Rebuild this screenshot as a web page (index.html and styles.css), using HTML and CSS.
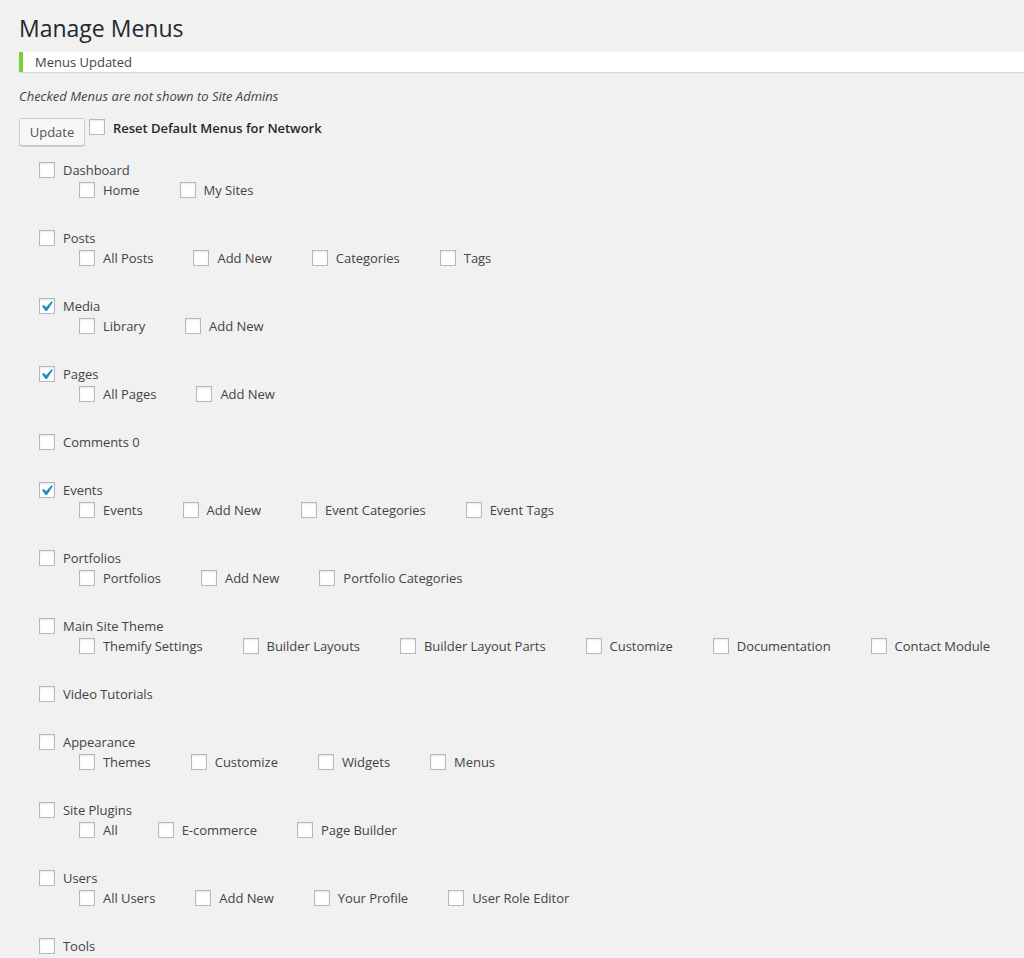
FILE: index.html
```html
<!DOCTYPE html>
<html>
<head>
<meta charset="utf-8">
<link rel="stylesheet" href="styles.css">
</head>
<body>
<div class="wrap">
  <h1 class="title">Manage Menus</h1>
  <div class="notice">Menus Updated</div>
  <p class="desc">Checked Menus are not shown to Site Admins</p>
  <div class="actions">
    <button class="btn">Update</button>
    <span class="cb reset-cb"></span>
    <span class="reset-label">Reset Default Menus for Network</span>
  </div>
  <div class="menus">
    <div class="group">
      <div class="row top"><span class="cb"></span><span class="lbl">Dashboard</span></div>
      <div class="row sub">
        <div class="item"><span class="cb"></span><span class="lbl">Home</span></div>
        <div class="item"><span class="cb"></span><span class="lbl">My Sites</span></div>
      </div>
    </div>
    <div class="group">
      <div class="row top"><span class="cb"></span><span class="lbl">Posts</span></div>
      <div class="row sub">
        <div class="item"><span class="cb"></span><span class="lbl">All Posts</span></div>
        <div class="item"><span class="cb"></span><span class="lbl">Add New</span></div>
        <div class="item"><span class="cb"></span><span class="lbl">Categories</span></div>
        <div class="item"><span class="cb"></span><span class="lbl">Tags</span></div>
      </div>
    </div>
    <div class="group">
      <div class="row top"><span class="cb checked"><svg viewBox="0 0 20 20"><path d="M14.83 4.89l1.34.94-5.81 8.38H9.02L5.78 9.67l1.34-1.25 2.570 2.4z"/></svg></span><span class="lbl">Media</span></div>
      <div class="row sub">
        <div class="item"><span class="cb"></span><span class="lbl">Library</span></div>
        <div class="item"><span class="cb"></span><span class="lbl">Add New</span></div>
      </div>
    </div>
    <div class="group">
      <div class="row top"><span class="cb checked"><svg viewBox="0 0 20 20"><path d="M14.83 4.89l1.34.94-5.81 8.38H9.02L5.78 9.67l1.34-1.25 2.57 2.4z"/></svg></span><span class="lbl">Pages</span></div>
      <div class="row sub">
        <div class="item"><span class="cb"></span><span class="lbl">All Pages</span></div>
        <div class="item"><span class="cb"></span><span class="lbl">Add New</span></div>
      </div>
    </div>
    <div class="group">
      <div class="row top"><span class="cb"></span><span class="lbl">Comments 0</span></div>
    </div>
    <div class="group">
      <div class="row top"><span class="cb checked"><svg viewBox="0 0 20 20"><path d="M14.83 4.89l1.34.94-5.81 8.38H9.02L5.78 9.67l1.34-1.25 2.57 2.4z"/></svg></span><span class="lbl">Events</span></div>
      <div class="row sub">
        <div class="item"><span class="cb"></span><span class="lbl">Events</span></div>
        <div class="item"><span class="cb"></span><span class="lbl">Add New</span></div>
        <div class="item"><span class="cb"></span><span class="lbl">Event Categories</span></div>
        <div class="item"><span class="cb"></span><span class="lbl">Event Tags</span></div>
      </div>
    </div>
    <div class="group">
      <div class="row top"><span class="cb"></span><span class="lbl">Portfolios</span></div>
      <div class="row sub">
        <div class="item"><span class="cb"></span><span class="lbl">Portfolios</span></div>
        <div class="item"><span class="cb"></span><span class="lbl">Add New</span></div>
        <div class="item"><span class="cb"></span><span class="lbl">Portfolio Categories</span></div>
      </div>
    </div>
    <div class="group">
      <div class="row top"><span class="cb"></span><span class="lbl">Main Site Theme</span></div>
      <div class="row sub">
        <div class="item"><span class="cb"></span><span class="lbl">Themify Settings</span></div>
        <div class="item"><span class="cb"></span><span class="lbl">Builder Layouts</span></div>
        <div class="item"><span class="cb"></span><span class="lbl">Builder Layout Parts</span></div>
        <div class="item"><span class="cb"></span><span class="lbl">Customize</span></div>
        <div class="item"><span class="cb"></span><span class="lbl">Documentation</span></div>
        <div class="item"><span class="cb"></span><span class="lbl">Contact Module</span></div>
      </div>
    </div>
    <div class="group">
      <div class="row top"><span class="cb"></span><span class="lbl">Video Tutorials</span></div>
    </div>
    <div class="group">
      <div class="row top"><span class="cb"></span><span class="lbl">Appearance</span></div>
      <div class="row sub">
        <div class="item"><span class="cb"></span><span class="lbl">Themes</span></div>
        <div class="item"><span class="cb"></span><span class="lbl">Customize</span></div>
        <div class="item"><span class="cb"></span><span class="lbl">Widgets</span></div>
        <div class="item"><span class="cb"></span><span class="lbl">Menus</span></div>
      </div>
    </div>
    <div class="group">
      <div class="row top"><span class="cb"></span><span class="lbl">Site Plugins</span></div>
      <div class="row sub">
        <div class="item"><span class="cb"></span><span class="lbl">All</span></div>
        <div class="item"><span class="cb"></span><span class="lbl">E-commerce</span></div>
        <div class="item"><span class="cb"></span><span class="lbl">Page Builder</span></div>
      </div>
    </div>
    <div class="group">
      <div class="row top"><span class="cb"></span><span class="lbl">Users</span></div>
      <div class="row sub">
        <div class="item"><span class="cb"></span><span class="lbl">All Users</span></div>
        <div class="item"><span class="cb"></span><span class="lbl">Add New</span></div>
        <div class="item"><span class="cb"></span><span class="lbl">Your Profile</span></div>
        <div class="item"><span class="cb"></span><span class="lbl">User Role Editor</span></div>
      </div>
    </div>
    <div class="group">
      <div class="row top"><span class="cb"></span><span class="lbl">Tools</span></div>
    </div>
  </div>
</div>
</body>
</html>
```

FILE: styles.css
```css
html, body {
  margin: 0;
  padding: 0;
  background: #f1f1f1;
}
body {
  font-family: "Open Sans", "Liberation Sans", sans-serif;
  font-size: 13px;
  color: #444;
  overflow: hidden;
  height: 958px;
}
.wrap {
  padding-left: 19px;
}
.title {
  margin: 13px 0 0 0;
  font-size: 23px;
  line-height: 30px;
  font-weight: 400;
  color: #23282d;
}
.notice {
  margin-top: 9px;
  background: #fff;
  border-left: 4px solid #7ad03a;
  box-shadow: 0 1px 1px rgba(0, 0, 0, 0.1);
  padding: 0 12px;
  line-height: 20px;
  height: 20px;
  color: #444;
}
.desc {
  margin: 14px 0 0 0;
  line-height: 20px;
  font-style: italic;
}
.actions {
  margin-top: 12px;
  display: flex;
  align-items: flex-start;
}
.btn {
  width: 66px;
  height: 28px;
  padding: 0;
  margin: 0;
  font-family: inherit;
  font-size: 13px;
  color: #555;
  background: #f7f7f7;
  border: 1px solid #ccc;
  border-radius: 3px;
  box-shadow: 0 1px 0 #ccc;
  box-sizing: border-box;
  line-height: 26px;
}
.reset-cb {
  margin: 1px 0 0 4px;
}
.reset-label {
  margin-left: 8px;
  line-height: 20px;
  font-weight: 600;
  color: #23282d;
  letter-spacing: -0.03px;
}
.menus {
  margin-top: 14px;
  padding-left: 20px;
}
.group {
  margin-bottom: 28px;
}
.row {
  display: flex;
  align-items: center;
  height: 20px;
}
.sub {
  padding-left: 40px;
}
.item {
  display: flex;
  align-items: center;
  margin-right: 40px;
}
.cb {
  position: relative;
  display: inline-block;
  width: 16px;
  height: 16px;
  box-sizing: border-box;
  border: 1px solid #b4b9be;
  background: #fff;
  box-shadow: inset 0 1px 2px rgba(0, 0, 0, 0.1);
  flex: none;
}
.cb svg {
  position: absolute;
  left: -4px;
  top: -3px;
  width: 21px;
  height: 21px;
  fill: #1e8cbe;
}
.lbl {
  margin-left: 8px;
  line-height: 20px;
  white-space: nowrap;
  letter-spacing: -0.04px;
}
```
